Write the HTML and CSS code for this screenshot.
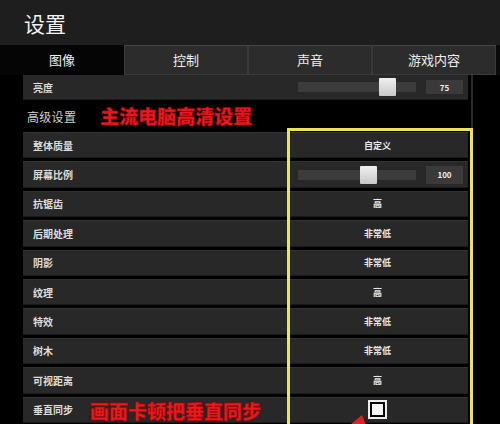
FILE: index.html
```html
<!DOCTYPE html>
<html lang="zh">
<head>
<meta charset="utf-8">
<link rel="stylesheet" href="styles.css">
</head>
<body>
<div class="app">
  <header class="topbar"><h1 class="title">设置</h1></header>
  <nav class="tabs">
    <div class="tab active">图像</div>
    <div class="tab">控制</div>
    <div class="tab">声音</div>
    <div class="tab">游戏内容</div>
  </nav>
  <main class="content">
    <div class="scrollbar"></div>
    <div class="list">
      <div class="row row-top">
        <div class="label">亮度</div>
        <div class="value slider-cell">
          <div class="track"><div class="knob" style="left:81px"></div></div>
          <div class="numbox">75</div>
        </div>
      </div>
      <div class="section">
        <span class="section-title">高级设置</span>
        <span class="note note-top">主流电脑高清设置</span>
      </div>
      <div class="row"><div class="label">整体质量</div><div class="value">自定义</div></div>
      <div class="row">
        <div class="label">屏幕比例</div>
        <div class="value slider-cell">
          <div class="track"><div class="knob" style="left:62px"></div></div>
          <div class="numbox">100</div>
        </div>
      </div>
      <div class="row"><div class="label">抗锯齿</div><div class="value">高</div></div>
      <div class="row"><div class="label">后期处理</div><div class="value">非常低</div></div>
      <div class="row"><div class="label">阴影</div><div class="value">非常低</div></div>
      <div class="row"><div class="label">纹理</div><div class="value">高</div></div>
      <div class="row"><div class="label">特效</div><div class="value">非常低</div></div>
      <div class="row"><div class="label">树木</div><div class="value">非常低</div></div>
      <div class="row"><div class="label">可视距离</div><div class="value">高</div></div>
      <div class="row">
        <div class="label">垂直同步</div>
        <div class="value"><span class="checkbox"><span class="check-fill"></span></span></div>
      </div>
    </div>
    <div class="highlight"></div>
    <span class="note note-bottom">画面卡顿把垂直同步</span>
    <svg class="arrow" width="30" height="14" viewBox="0 0 30 14"><polygon points="8,14 20,4 24,14" fill="#d8232a"/></svg>
  </main>
</div>
</body>
</html>
```
FILE: styles.css
```css
* { box-sizing: border-box; margin: 0; padding: 0; }
html, body { width: 500px; height: 424px; overflow: hidden; background: #000; }
body { font-family: "Noto Sans CJK SC", "Noto Sans", sans-serif; color: #ddd; }
.app { width: 500px; height: 424px; display: flex; flex-direction: column; }
.topbar { height: 45px; background: #1e1e1e; display: flex; align-items: center; padding-left: 24px; padding-top: 1px; }
.title { font-size: 21px; font-weight: 400; color: #f2f2f2; line-height: 1; }
.tabs { height: 30px; display: grid; grid-template-columns: 124px 124px 124px 124px; background: #0a0a0a; }
.tab { display: flex; align-items: center; justify-content: center; font-size: 13px; color: #eee; background: #2c2c2c; border: 1px solid #3a3a3a; border-top-color: #444; padding-bottom: 2px; }
.tab.active { background: #050505; border-color: #050505; }
.content { position: relative; flex: 1; overflow: hidden; background: #000; padding-left: 23px; }
.scrollbar { position: absolute; left: 471px; top: 0; bottom: 0; width: 2px; background: #2a2a2a; }
.list { width: 445px; display: flex; flex-direction: column; gap: 3px; }
.row { height: 26.4px; display: grid; grid-template-columns: 264px 1fr; background: #282828; border-top: 1px solid #333; border-bottom: 1px solid #1a1a1a; }
.row-top { height: 26px; margin-top: -1px; }
.label { display: flex; align-items: center; padding-left: 10px; font-size: 10px; font-weight: 700; color: #ddd; }
.value { display: flex; align-items: center; justify-content: center; font-size: 9px; font-weight: 700; color: #e8e8e8; }
.slider-cell { justify-content: flex-start; padding-left: 11px; gap: 10px; }
.track { position: relative; width: 118px; height: 10px; background: #3c3c3c; }
.knob { position: absolute; top: -4px; width: 17px; height: 18px; background: linear-gradient(#f0f0f0, #c8c8c8); border-radius: 1px; }
.numbox { width: 37px; height: 18px; background: #3a3a3a; display: flex; align-items: center; justify-content: center; font-size: 8px; color: #eee; }
.row-top .numbox { height: 14px; }
.section { height: 26px; display: flex; align-items: center; gap: 24px; padding-left: 4px; }
.section-title { font-size: 12px; color: #d0d0d0; letter-spacing: 0.3px; }
.note { font-weight: 900; color: #e41b1f; font-size: 19px; line-height: 1; -webkit-text-stroke: 0.4px #a00; text-shadow: 0 0 2px rgba(120,0,0,0.6); }
.note-top { margin-top: -2px; }
.note-bottom { position: absolute; left: 90px; top: 326px; }
.checkbox { width: 19px; height: 19px; border: 2px solid #eee; background: #000; padding: 2px; display: flex; }
.check-fill { flex: 1; background: #f4f4f4; }
.highlight { position: absolute; left: 287px; top: 53px; width: 186px; height: 400px; border: 3px solid #ebe35a; pointer-events: none; }
.arrow { position: absolute; left: 342px; top: 336px; }
```
